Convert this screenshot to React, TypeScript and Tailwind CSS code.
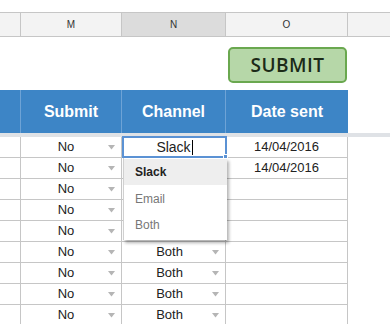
const LINE = "border-[#c6c6c6]";

type Row = { submit: string; channel: string; date: string };

const ROWS: Row[] = [
  { submit: "No", channel: "", date: "14/04/2016" },
  { submit: "No", channel: "", date: "14/04/2016" },
  { submit: "No", channel: "", date: "" },
  { submit: "No", channel: "", date: "" },
  { submit: "No", channel: "", date: "" },
  { submit: "No", channel: "Both", date: "" },
  { submit: "No", channel: "Both", date: "" },
  { submit: "No", channel: "Both", date: "" },
  { submit: "No", channel: "Both", date: "" },
];

function Arrow() {
  return (
    <svg width="7" height="5" viewBox="0 0 7 5" className="absolute right-[6px] top-[8px]">
      <path d="M0 0 L7 0 L3.5 4.5 Z" fill="#b5b5b5" />
    </svg>
  );
}

function DropdownMenu() {
  return (
    <div className="absolute left-[123px] top-[158px] w-[104px] h-[82px] bg-white border-l border-[#d0d0d0] shadow-[2px_3px_3px_rgba(0,0,0,0.3)] pt-[1px]">
      <div className="h-[26px] bg-[#eeeeee] flex items-center pl-[11px] text-[12px] font-bold text-[#222]">
        Slack
      </div>
      <div className="h-[27px] flex items-center pl-[11px] text-[12px] text-[#777]">Email</div>
      <div className="h-[26px] flex items-center pl-[11px] text-[12px] text-[#777]">Both</div>
    </div>
  );
}

export default function App() {
  return (
    <div className="relative w-[390px] h-[324px] overflow-hidden bg-white font-['Liberation_Sans',Arial,sans-serif] text-[#222]">
      <div className="h-[12px]" />

      {/* column letters */}
      <div className={`flex h-[25px] border-y ${LINE} bg-[#f3f3f3] text-[10px] text-[#333]`}>
        <div className={`w-[21px] border-r ${LINE}`} />
        <div className={`w-[101px] border-r ${LINE} flex items-center justify-center`}>M</div>
        <div className={`w-[104px] border-r ${LINE} bg-[#dcdcdc] flex items-center justify-center`}>N</div>
        <div className={`w-[122px] border-r ${LINE} flex items-center justify-center`}>O</div>
        <div className="flex-1" />
      </div>

      {/* button row */}
      <div className="flex h-[53px]">
        <div className="w-[228px]" />
        <div className="pt-[10px]">
          <button className="w-[119px] h-[36px] rounded-[5px] bg-[#b6d7a8] border-2 border-[#6aa84f] flex items-center justify-center text-[19px] font-semibold text-[#1c2a18] tracking-[0.5px] font-['Open_Sans',sans-serif]">
            SUBMIT
          </button>
        </div>
      </div>

      {/* blue header */}
      <div className="flex h-[43px]">
        <div className="w-[348px] flex bg-[#3d85c6] text-white text-[16px] font-bold">
          <div className="w-[21px] border-r border-[#6ea3d6]" />
          <div className="w-[101px] border-r border-[#6ea3d6] flex items-center justify-center">Submit</div>
          <div className="w-[104px] border-r border-[#6ea3d6] flex items-center justify-center">Channel</div>
          <div className="w-[122px] flex items-center justify-center">Date sent</div>
        </div>
      </div>
      <div className="h-[4px] bg-[#dfe2e6]" />

      {/* data rows */}
      {ROWS.map((r, i) => (
        <div key={i} className="flex h-[21px] text-[13px]">
          <div className={`w-[21px] border-r border-b ${LINE}`} />
          <div className={`relative w-[101px] border-r border-b ${LINE} flex items-center justify-center pr-[10px]`}>
            {r.submit}
            <Arrow />
          </div>
          <div className={`relative w-[104px] border-r border-b ${LINE} flex items-center justify-center pr-[8px]`}>
            {r.channel}
            {r.channel && <Arrow />}
          </div>
          <div className={`w-[122px] border-r border-b ${LINE} flex items-center justify-center`}>{r.date}</div>
          <div className="flex-1" />
        </div>
      ))}

      {/* editing cell */}
      <div className="absolute left-[122px] top-[136px] w-[105px] h-[22px] border-2 border-[#5b92d4] bg-white flex items-center justify-center text-[14px]">
        <span>Slack</span>
        <span className="w-[1px] h-[15px] bg-black ml-[1px]" />
        <div className="absolute -right-[3px] -bottom-[3px] w-[5px] h-[5px] bg-[#5b92d4] border border-white" />
      </div>

      <DropdownMenu />
    </div>
  );
}
